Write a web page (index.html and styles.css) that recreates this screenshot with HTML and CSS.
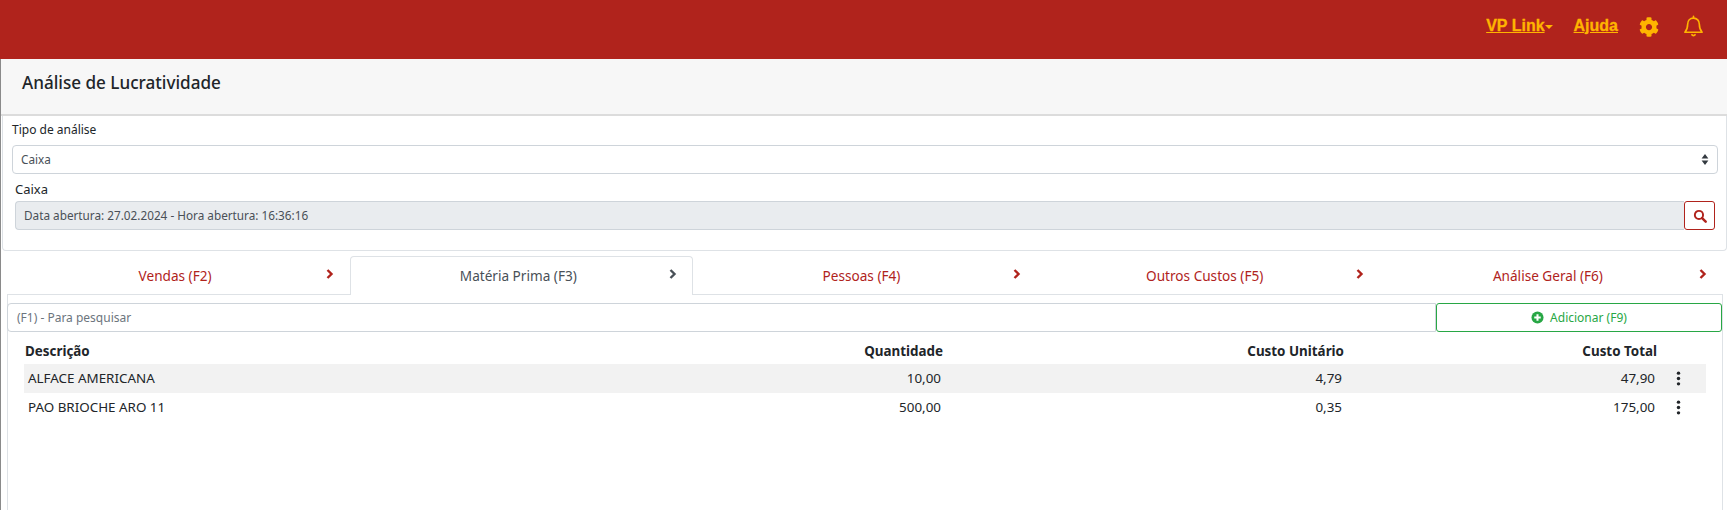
FILE: index.html
```html
<!DOCTYPE html>
<html lang="pt-BR">
<head>
<meta charset="utf-8">
<title>Análise de Lucratividade</title>
<link rel="stylesheet" href="styles.css">
</head>
<body>
<header class="topbar">
  <a class="top-link" href="#">VP Link</a><span class="caret"></span>
  <a class="top-link help" href="#">Ajuda</a>
  <svg class="gear" viewBox="0 0 512 512"><path fill="#ffb400" d="M487.4 315.7l-42.6-24.6c4.3-23.2 4.3-47 0-70.2l42.6-24.6c4.900-2.800 7.100-8.600 5.500-14-11.100-35.600-30-67.800-54.700-94.600-3.800-4.100-10-5.100-14.800-2.300L380.800 110c-17.900-15.400-38.500-27.300-60.800-35.100V25.800c0-5.600-3.900-10.500-9.400-11.700-36.700-8.200-74.300-7.800-109.200 0-5.500 1.200-9.400 6.100-9.400 11.700V75c-22.200 7.900-42.800 19.800-60.800 35.100L88.700 85.500c-4.900-2.800-11-1.900-14.800 2.300-24.700 26.700-43.600 58.900-54.700 94.600-1.700 5.400.600 11.200 5.500 14L67.300 221c-4.300 23.200-4.300 47 0 70.200l-42.600 24.600c-4.900 2.800-7.100 8.600-5.500 14 11.100 35.600 30 67.800 54.700 94.600 3.800 4.100 10 5.100 14.800 2.300l42.600-24.600c17.900 15.400 38.500 27.300 60.800 35.100v49.200c0 5.600 3.900 10.500 9.400 11.700 36.700 8.200 74.300 7.800 109.200 0 5.500-1.200 9.400-6.100 9.400-11.700v-49.200c22.200-7.900 42.800-19.800 60.800-35.100l42.600 24.600c4.900 2.800 11 1.900 14.800-2.300 24.700-26.700 43.600-58.900 54.700-94.600 1.500-5.500-.7-11.300-5.600-14.100zM256 336c-44.100 0-80-35.900-80-80s35.900-80 80-80 80 35.900 80 80-35.900 80-80 80z"/></svg>
  <svg class="bell" viewBox="0 0 24 24" fill="none" stroke="#ffb400" stroke-width="1.700" stroke-linecap="round" stroke-linejoin="round"><path d="M12 3.200c-3.700 0-6.100 2.900-6.100 6.500 0 4.300-.9 6.200-2.900 8.300h18c-2-2.100-2.900-4-2.900-8.300 0-3.600-2.400-6.500-6.100-6.500z"/><path d="M12 1.300v1.900M10.300 20.500c.5 1.300 2.900 1.300 3.400 0"/></svg>
</header>

<main class="page">
  <h1 class="page-title">Análise de Lucratividade</h1>

  <section class="filter-card">
    <label class="field-label">Tipo de análise</label>
    <div class="select-box">
      <span class="select-value">Caixa</span>
      <svg class="updown" viewBox="0 0 10 14"><path fill="#343a40" d="M5 0l4.300 5.600H.7zM5 14L.7 8.400h8.600z"/></svg>
    </div>
    <label class="field-label sub-label">Caixa</label>
    <div class="input-group">
      <div class="readonly-input">Data abertura: 27.02.2024 - Hora abertura: 16:36:16</div>
      <button class="search-btn" type="button">
        <svg viewBox="0 0 16 16" fill="none" stroke="#b0231c"><circle cx="6.800" cy="6.800" r="4.700" stroke-width="2.200"/><path d="M10.400 10.400l4.100 4.100" stroke-width="2.800" stroke-linecap="round"/></svg>
      </button>
    </div>
  </section>

  <section class="tabs-area">
    <nav class="tabs">
      <a class="tab" href="#"><span class="tab-text">Vendas (F2)</span><svg class="chev" viewBox="0 0 8 10"><path d="M1.500 1l4 4-4 4" /></svg></a>
      <a class="tab active" href="#"><span class="tab-text">Matéria Prima (F3)</span><svg class="chev" viewBox="0 0 8 10"><path d="M1.500 1l4 4-4 4" /></svg></a>
      <a class="tab" href="#"><span class="tab-text">Pessoas (F4)</span><svg class="chev" viewBox="0 0 8 10"><path d="M1.500 1l4 4-4 4" /></svg></a>
      <a class="tab" href="#"><span class="tab-text">Outros Custos (F5)</span><svg class="chev" viewBox="0 0 8 10"><path d="M1.500 1l4 4-4 4" /></svg></a>
      <a class="tab" href="#"><span class="tab-text">Análise Geral (F6)</span><svg class="chev" viewBox="0 0 8 10"><path d="M1.500 1l4 4-4 4" /></svg></a>
    </nav>
    <div class="tab-panel">
      <div class="toolbar">
        <div class="search-input">(F1) - Para pesquisar</div>
        <button class="add-btn" type="button">
          <svg viewBox="0 0 14 14"><circle cx="7" cy="7" r="6.500" fill="#28a745"/><path d="M7 3.500v7M3.500 7h7" stroke="#fff" stroke-width="2.200"/></svg>
          Adicionar (F9)
        </button>
      </div>
      <table class="grid">
        <thead>
          <tr><th class="col-desc">Descrição</th><th class="num col-qty">Quantidade</th><th class="num col-unit">Custo Unitário</th><th class="num col-total">Custo Total</th><th class="col-menu"></th></tr>
        </thead>
        <tbody>
          <tr><td>ALFACE AMERICANA</td><td class="num">10,00</td><td class="num">4,79</td><td class="num">47,90</td><td class="menu"><svg viewBox="0 0 4 14"><circle cx="2" cy="2" r="1.600"/><circle cx="2" cy="7" r="1.600"/><circle cx="2" cy="12" r="1.600"/></svg></td></tr>
          <tr><td>PAO BRIOCHE ARO 11</td><td class="num">500,00</td><td class="num">0,35</td><td class="num">175,00</td><td class="menu"><svg viewBox="0 0 4 14"><circle cx="2" cy="2" r="1.600"/><circle cx="2" cy="7" r="1.600"/><circle cx="2" cy="12" r="1.600"/></svg></td></tr>
        </tbody>
      </table>
    </div>
  </section>
</main>
</body>
</html>
```
FILE: styles.css
```css
* { box-sizing: border-box; }
html, body { margin: 0; height: 510px; overflow: hidden; background: #fff; }
body { font-family: "Noto Sans", "Open Sans", sans-serif; font-size: 11.750px; color: #212529; }

.topbar {
  height: 59px;
  background: #b0231c;
  display: flex;
  align-items: center;
  justify-content: flex-end;
  padding: 0 22px 6px 0;
}
.top-link {
  font-family: "Liberation Sans", sans-serif;
  font-size: 16px;
  font-weight: 700;
  color: #ffb400;
  text-decoration: underline;
  -webkit-text-stroke: 0.3px #ffb400;
  position: relative;
  top: -1px;
}
.caret {
  width: 0; height: 0;
  border-left: 4px solid transparent;
  border-right: 4px solid transparent;
  border-top: 4.500px solid #ffb400;
}
.help { margin-left: 21px; }
.gear { width: 20px; height: 20px; margin-left: 21px; }
.bell { width: 23px; height: 23px; margin-left: 23px; }

.page { border-left: 1px solid #8a8a8a; height: 451px; }
.page-title {
  margin: 0;
  height: 57px;
  padding: 12px 0 0 21px;
  background: #f7f7f7;
  border-bottom: 2px solid #dcdcdc;
  font-size: 17.100px;
  line-height: 24px;
  font-weight: 500;
  color: #212529;
}

.filter-card {
  margin: 0 0 0 1px;
  height: 135px;
  padding: 5px 8px 0 9px;
  border: 1px solid #dee2e6;
  border-top: 0;
  border-radius: 0 0 4px 4px;
}
.field-label { display: block; font-size: 12px; line-height: 18px; color: #212529; }
.select-box {
  margin-top: 6px;
  height: 29px;
  display: flex;
  align-items: center;
  justify-content: space-between;
  padding: 0 8px 0 8px;
  border: 1px solid #ced4da;
  border-radius: 4px;
  color: #495057;
}
.select-value { padding-bottom: 2px; }
.updown { width: 8px; height: 11px; }
.sub-label { margin: 6px 0 0 3px; font-size: 13px; }
.input-group { display: flex; margin: 3px 3px 0 3px; height: 29px; }
.readonly-input {
  flex: 1;
  background: #e9ecef;
  border: 1px solid #ced4da;
  border-right: 0;
  border-radius: 4px 0 0 4px;
  padding: 0 8px;
  line-height: 27px;
  color: #495057;
}
.search-btn {
  width: 31px;
  padding: 0;
  background: #fff;
  border: 1px solid #b0231c;
  border-radius: 3px;
  display: flex;
  align-items: center;
  justify-content: center;
}
.search-btn svg { width: 14px; height: 14px; }

.tabs-area { padding: 5px 4px 0 6px; }
.tabs { display: flex; height: 39px; }
.tab {
  flex: 1;
  display: flex;
  align-items: flex-start;
  padding: 9px 15px 0 8px;
  color: #b0231c;
  text-decoration: none;
  font-size: 13.600px;
  line-height: 20px;
  border: 1px solid transparent;
  border-bottom: 0;
  border-radius: 4px 4px 0 0;
}
.tab.active {
  color: #495057;
  background: #fff;
  border-color: #dee2e6;
  position: relative;
  z-index: 1;
}
.tab-text { flex: 1; text-align: center; }
.chev { width: 8px; height: 10px; margin: 3px 0 0 -8px; fill: none; stroke: #b0231c; stroke-width: 2.400; }
.tab.active .chev { stroke: #495057; }

.tab-panel {
  border: 1px solid #dee2e6;
  border-bottom: 0;
  margin-top: -1px;
  height: 220px;
  padding-top: 8px;
}
.toolbar { display: flex; height: 29px; }
.search-input {
  width: 1429px;
  margin-left: -1px;
  border: 1px solid #ced4da;
  border-radius: 4px 0 0 4px;
  padding: 0 9px;
  line-height: 27px;
  color: #6c757d;
  font-size: 12px;
}
.add-btn {
  flex: 1;
  background: #fff;
  border: 1px solid #28a745;
  border-radius: 3px;
  color: #28a745;
  font: inherit;
  font-size: 12px;
  display: flex;
  align-items: center;
  justify-content: center;
  gap: 6px;
  padding: 0;
}
.add-btn svg { width: 13px; height: 13px; }

.grid {
  border-collapse: collapse;
  table-layout: fixed;
  width: 1682px;
  margin: 3px 0 0 16px;
  font-size: 13.400px;
  color: #212529;
}
.grid th { height: 29px; padding: 2px 1px 0; font-weight: 700; font-size: 13.400px; text-align: left; vertical-align: middle; }
.grid td { height: 29px; padding: 0 2px 2px 4px; vertical-align: middle; }
.grid .num { text-align: right; }
.grid th.num { padding-right: 0; }
.grid td.num { padding-right: 2px; }
.col-desc { width: 500px; }
.col-qty { width: 419px; }
.col-unit { width: 401px; }
.col-total { width: 313px; }
.col-menu { width: 49px; }
.grid tbody tr:first-child { background: #f2f2f2; }
.menu { padding-left: 19px !important; padding-bottom: 0 !important; }
.menu svg { display: block; width: 5px; height: 15px; fill: #212529; }
```
